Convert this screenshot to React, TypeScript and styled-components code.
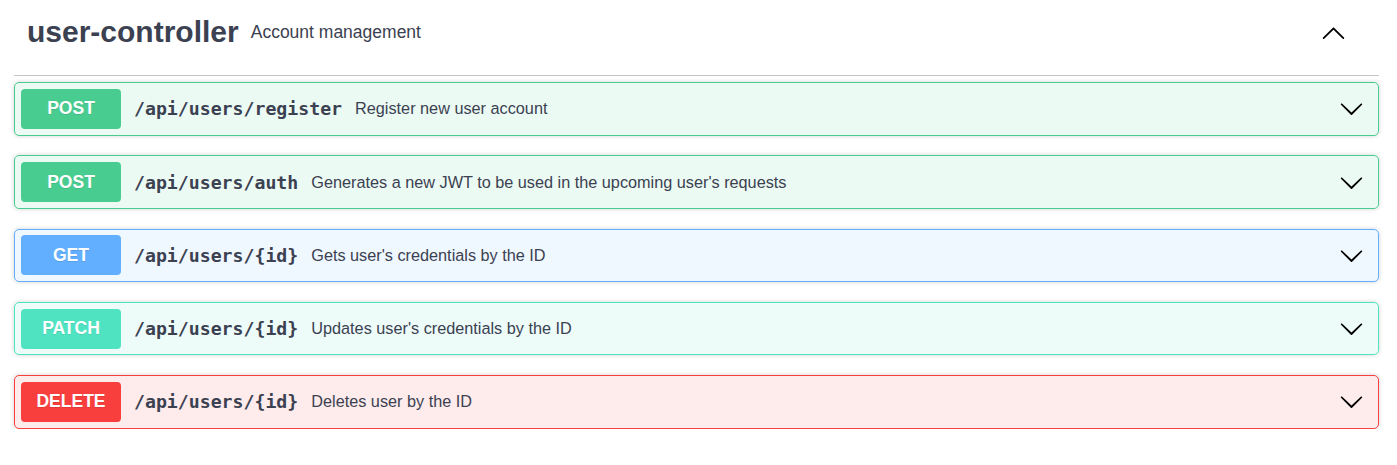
import React from "react";
import styled, { createGlobalStyle } from "styled-components";

const Global = createGlobalStyle`
  html, body { margin: 0; padding: 0; background: #fff; }
  body { font-family: "Liberation Sans", Arial, sans-serif; color: #3b4151; }
`;

const Page = styled.div`
  padding: 0 18px 0 14px;
`;

const TagHeader = styled.div`
  display: flex;
  align-items: center;
  height: 40px;
  padding: 12px 33px 23px 13px;
  border-bottom: 1px solid rgba(59, 65, 81, 0.3);
  margin-bottom: 6px;
`;

const TagTitle = styled.span`
  font-size: 30px;
  font-weight: 700;
  color: #3b4151;
`;

const TagDesc = styled.small`
  font-size: 17.5px;
  color: #3b4151;
  margin-left: 12px;
  flex: 1;
`;

const Ops = styled.div`
  display: flex;
  flex-direction: column;
  gap: 19.75px;
`;

const colors = {
  POST: "73, 204, 144",
  GET: "97, 175, 254",
  PATCH: "80, 227, 194",
  DELETE: "249, 62, 62",
} as const;

type Method = keyof typeof colors;

const Block = styled.div<{ $rgb: string }>`
  display: flex;
  align-items: center;
  height: 53.5px;
  box-sizing: border-box;
  padding: 6px 14px 6px 6px;
  border: 1px solid rgb(${(p) => p.$rgb});
  background: rgba(${(p) => p.$rgb}, 0.1);
  border-radius: 5px;
  box-shadow: 0 0 4px rgba(0, 0, 0, 0.19);
`;

const Badge = styled.span<{ $rgb: string }>`
  display: flex;
  align-items: center;
  justify-content: center;
  width: 100px;
  height: 40px;
  flex: none;
  border-radius: 4px;
  background: rgb(${(p) => p.$rgb});
  color: #fff;
  font-size: 17.5px;
  font-weight: 700;
  text-shadow: 0 1px 0 rgba(0, 0, 0, 0.1);
`;

const Path = styled.span`
  font-family: "DejaVu Sans Mono", monospace;
  font-weight: 700;
  font-size: 18.2px;
  color: #3b4151;
  padding: 0 13px;
`;

const Desc = styled.span`
  flex: 1;
  font-size: 16.25px;
  color: #3b4151;
`;

const Arrow = styled.svg`
  width: 25px;
  height: 25px;
  flex: none;
`;

const Down = () => (
  <Arrow viewBox="0 0 20 20">
    <path
      fill="#000"
      d="M17.418 6.109c.272-.268.709-.268.979 0s.271.701 0 .969l-7.908 7.83c-.27.268-.707.268-.979 0l-7.908-7.83c-.27-.268-.27-.701 0-.969.271-.268.709-.268.979 0L10 13.25l7.418-7.141z"
    />
  </Arrow>
);

const Up = () => (
  <Arrow viewBox="0 0 20 20">
    <path
      fill="#000"
      d="M17.418 14.908c.272.268.709.268.979 0s.271-.701 0-.969l-7.908-7.83c-.27-.268-.707-.268-.979 0l-7.908 7.83c-.27.268-.27.701 0 .969.271.268.709.268.979 0L10 7.767l7.418 7.141z"
    />
  </Arrow>
);

const ops: { m: Method; path: string; desc: string }[] = [
  { m: "POST", path: "/api/users/register", desc: "Register new user account" },
  { m: "POST", path: "/api/users/auth", desc: "Generates a new JWT to be used in the upcoming user's requests" },
  { m: "GET", path: "/api/users/{id}", desc: "Gets user's credentials by the ID" },
  { m: "PATCH", path: "/api/users/{id}", desc: "Updates user's credentials by the ID" },
  { m: "DELETE", path: "/api/users/{id}", desc: "Deletes user by the ID" },
];

export default function App() {
  return (
    <Page>
      <Global />
      <TagHeader>
        <TagTitle>user-controller</TagTitle>
        <TagDesc>Account management</TagDesc>
        <Up />
      </TagHeader>
      <Ops>
        {ops.map((o, i) => (
          <Block key={i} $rgb={colors[o.m]}>
            <Badge $rgb={colors[o.m]}>{o.m}</Badge>
            <Path>{o.path}</Path>
            <Desc>{o.desc}</Desc>
            <Down />
          </Block>
        ))}
      </Ops>
    </Page>
  );
}
